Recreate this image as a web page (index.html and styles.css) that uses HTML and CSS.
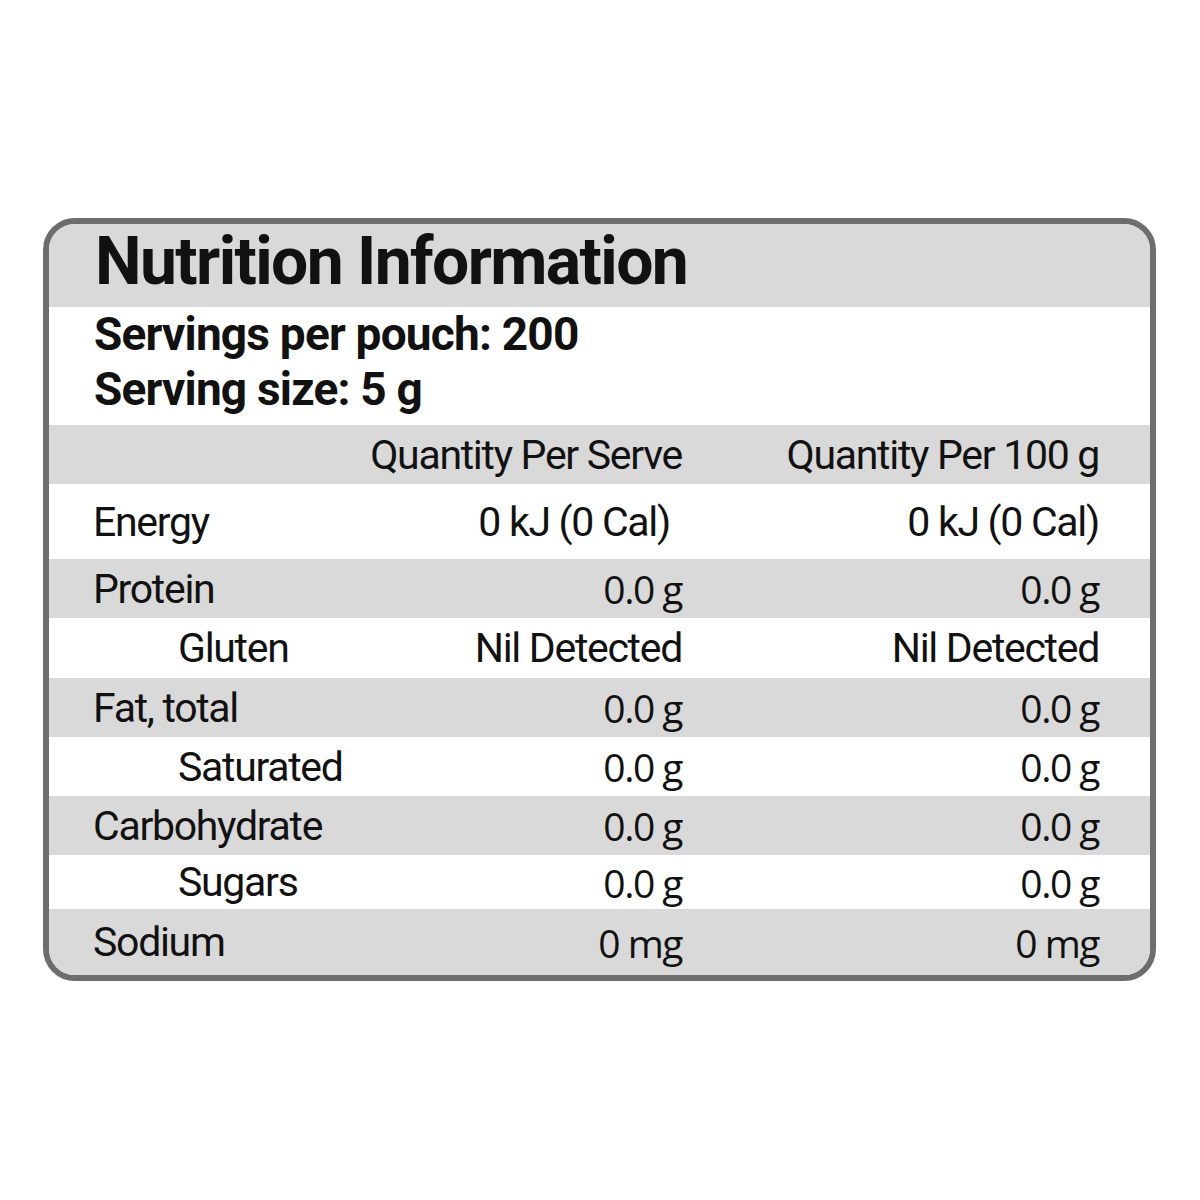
FILE: index.html
```html
<!DOCTYPE html>
<html>
<head>
<meta charset="utf-8">
<link rel="stylesheet" href="styles.css">
</head>
<body>
<div class="panel">
  <div class="title band">Nutrition Information</div>
  <div class="servings">
    <div>Servings per pouch: 200</div>
    <div>Serving size: 5 g</div>
  </div>
  <div class="row head band"><span></span><span class="v">Quantity Per Serve</span><span class="v">Quantity Per 100 g</span></div>
  <div class="row r-energy"><span class="l">Energy</span><span class="v e">0 kJ (0 Cal)</span><span class="v">0 kJ (0 Cal)</span></div>
  <div class="row band r-short"><span class="l">Protein</span><span class="v n">0.0 g</span><span class="v n">0.0 g</span></div>
  <div class="row r-mid"><span class="l sub">Gluten</span><span class="v">Nil Detected</span><span class="v">Nil Detected</span></div>
  <div class="row band r-short"><span class="l">Fat, total</span><span class="v n">0.0 g</span><span class="v n">0.0 g</span></div>
  <div class="row r-short"><span class="l sub">Saturated</span><span class="v n">0.0 g</span><span class="v n">0.0 g</span></div>
  <div class="row band r-short"><span class="l">Carbohydrate</span><span class="v n">0.0 g</span><span class="v n">0.0 g</span></div>
  <div class="row r-sug"><span class="l sub">Sugars</span><span class="v n">0.0 g</span><span class="v n">0.0 g</span></div>
  <div class="row band r-sod"><span class="l">Sodium</span><span class="v n">0 mg</span><span class="v n">0 mg</span></div>
</div>
</body>
</html>
```
FILE: styles.css
```css
html, body {
  margin: 0;
  padding: 0;
  background: #ffffff;
}
body {
  padding-top: 218px;
  padding-left: 43px;
  font-family: Roboto, "Liberation Sans", sans-serif;
  color: #111111;
}
.panel {
  width: 1101px;
  border: 6px solid #6d6d6d;
  border-radius: 32px;
  overflow: hidden;
  background: #ffffff;
}
.band {
  background: #d9d9d9;
}
.title {
  height: 83px;
  display: flex;
  align-items: center;
  padding-left: 46px;
  font-weight: 700;
  font-size: 66px;
  letter-spacing: -1.6px;
  box-sizing: border-box;
  padding-bottom: 8px;
}
.servings {
  height: 118px;
  box-sizing: border-box;
  padding: 0 0 0 45px;
  font-weight: 700;
  font-size: 46px;
  letter-spacing: -0.8px;
  line-height: 55px;
}
.row {
  display: grid;
  grid-template-columns: 1fr 320px 417px;
  padding: 0 51px 0 44px;
  align-items: center;
  font-size: 41px;
  letter-spacing: -1.3px;
  font-weight: 400;
}
.row .v {
  text-align: right;
}
.row .v.e {
  padding-right: 12px;
}
.row .n {
  font-family: "Open Sans", sans-serif;
  font-size: 39px;
  letter-spacing: -1.5px;
}
.row .sub {
  padding-left: 85px;
}
.head { height: 59px; }
.r-energy { height: 75px; }
.r-short { height: 59px; }
.r-mid { height: 60px; }
.r-sug { height: 54px; }
.r-sod { height: 66px; }
```
